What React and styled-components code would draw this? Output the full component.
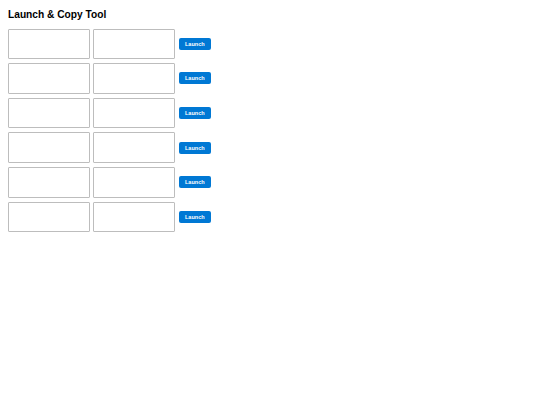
import React from "react";
import styled, { createGlobalStyle } from "styled-components";

const Global = createGlobalStyle`
  html, body { margin: 0; padding: 0; background: #fff; }
  body { font-family: "Liberation Sans", Arial, sans-serif; }
`;

const Page = styled.div`
  padding: 8px;
`;

const Title = styled.h3`
  margin: 1px 0 8px;
  font-size: 10.2px;
  line-height: 11.5px;
  font-weight: bold;
  color: #000;
`;

const Rows = styled.div`
  display: flex;
  flex-direction: column;
  gap: 4px;
`;

const Row = styled.div`
  display: flex;
  align-items: center;
  gap: 3.75px;
`;

const Box = styled.textarea`
  box-sizing: border-box;
  width: 81.5px;
  height: 30.67px;
  margin: 0;
  padding: 2px;
  border: 1px solid #bdbdbd;
  border-radius: 1px;
  resize: none;
  font-family: "Liberation Sans", Arial, sans-serif;
  font-size: 7px;
  background: #fff;
`;

const LaunchButton = styled.button`
  box-sizing: border-box;
  margin-left: 0.5px;
  height: 12px;
  padding: 0 6px;
  border: none;
  border-radius: 2px;
  background: #0078d4;
  color: #fff;
  font-family: "Liberation Sans", Arial, sans-serif;
  font-size: 5.5px;
  font-weight: bold;
  line-height: 12px;
  cursor: pointer;
`;

export default function App() {
  const rows = [0, 1, 2, 3, 4, 5];
  return (
    <Page>
      <Global />
      <Title>Launch &amp; Copy Tool</Title>
      <Rows>
        {rows.map((i) => (
          <Row key={i}>
            <Box />
            <Box />
            <LaunchButton>Launch</LaunchButton>
          </Row>
        ))}
      </Rows>
    </Page>
  );
}
